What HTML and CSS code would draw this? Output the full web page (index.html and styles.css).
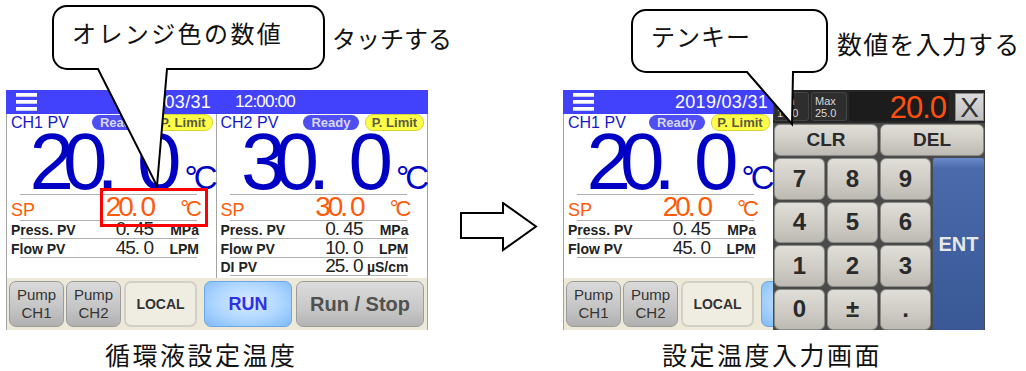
FILE: index.html
```html
<!DOCTYPE html>
<html lang="ja">
<head>
    <meta charset="UTF-8">
    <title>設定温度入力</title>
    <link rel="stylesheet" href="styles.css">
</head>
<body>

<div id="stage">
    <div class="figure">
        <div class="screen">
            <div class="hdr">
                <span class="menu"><i></i><i></i><i></i></span>
                <span class="date">2019/03/31</span>
                <span class="time">12:00:00</span>
            </div>
            <div class="panels">
                <div class="panel">
                    <div class="ptop">
                        <span class="ch">CH1 PV</span>
                        <span class="pill ready">Ready</span>
                        <span class="pill limit">P. Limit</span>
                    </div>
                    <div class="big">20. 0<span class="deg">°C</span></div>
                    <div class="row sp"><span class="lbl">SP</span><span class="val">20. 0</span><span class="unit">°C</span></div>
                    <div class="row r1"><span class="lbl">Press. PV</span><span class="val">0. 45</span><span class="unit">MPa</span></div>
                    <div class="row r2"><span class="lbl">Flow PV</span><span class="val">45. 0</span><span class="unit">LPM</span></div>
                </div>
                <div class="panel">
                    <div class="ptop">
                        <span class="ch">CH2 PV</span>
                        <span class="pill ready">Ready</span>
                        <span class="pill limit">P. Limit</span>
                    </div>
                    <div class="big">30. 0<span class="deg">°C</span></div>
                    <div class="row sp"><span class="lbl">SP</span><span class="val">30. 0</span><span class="unit">°C</span></div>
                    <div class="row r1"><span class="lbl">Press. PV</span><span class="val">0. 45</span><span class="unit">MPa</span></div>
                    <div class="row r2"><span class="lbl">Flow PV</span><span class="val">10. 0</span><span class="unit">LPM</span></div>
                    <div class="row r3"><span class="lbl">DI PV</span><span class="val">25. 0</span><span class="unit">µS/cm</span></div>
                </div>
            </div>
            <div class="bar">
                <div class="btn pump">Pump<br>CH1</div>
                <div class="btn pump pump2">Pump<br>CH2</div>
                <div class="btn local">LOCAL</div>
                <div class="btn run">RUN</div>
                <div class="btn runstop">Run / Stop</div>
            </div>
        </div>
        <p class="caption">循環液設定温度</p>
    </div>

    <div class="arrow">
        <svg width="78" height="50" viewBox="0 0 78 50">
            <path d="M1 11 H43 V1 L76 24.5 L43 48 V36 H1 Z" fill="#fff" stroke="#000" stroke-width="2"/>
        </svg>
    </div>

    <div class="figure">
        <div class="screen">
            <div class="hdr">
                <span class="menu"><i></i><i></i><i></i></span>
                <span class="date">2019/03/31</span>
                <span class="time">12:00:00</span>
            </div>
            <div class="panels">
                <div class="panel">
                    <div class="ptop">
                        <span class="ch">CH1 PV</span>
                        <span class="pill ready">Ready</span>
                        <span class="pill limit">P. Limit</span>
                    </div>
                    <div class="big">20. 0<span class="deg">°C</span></div>
                    <div class="row sp"><span class="lbl">SP</span><span class="val">20. 0</span><span class="unit">°C</span></div>
                    <div class="row r1"><span class="lbl">Press. PV</span><span class="val">0. 45</span><span class="unit">MPa</span></div>
                    <div class="row r2"><span class="lbl">Flow PV</span><span class="val">45. 0</span><span class="unit">LPM</span></div>
                </div>
                <div class="panel"></div>
            </div>
            <div class="bar">
                <div class="btn pump">Pump<br>CH1</div>
                <div class="btn pump pump2">Pump<br>CH2</div>
                <div class="btn local">LOCAL</div>
                <div class="btn run">RUN</div>
                <div class="btn runstop">Run / Stop</div>
            </div>

            <div class="keypad">
                <div class="kp-top">
                    <div class="lim">Min<br>15.0</div>
                    <div class="lim">Max<br>25.0</div>
                    <div class="display">20.0</div>
                    <div class="close">X</div>
                </div>
                <div class="keys">
                    <div class="key wide">CLR</div>
                    <div class="key wide">DEL</div>
                    <div class="key">7</div>
                    <div class="key">8</div>
                    <div class="key">9</div>
                    <div class="key ent">ENT</div>
                    <div class="key">4</div>
                    <div class="key">5</div>
                    <div class="key">6</div>
                    <div class="key">1</div>
                    <div class="key">2</div>
                    <div class="key">3</div>
                    <div class="key">0</div>
                    <div class="key">±</div>
                    <div class="key">.</div>
                </div>
            </div>
        </div>
        <p class="caption">設定温度入力画面</p>
    </div>

    <!-- callouts over the screens -->
    <svg class="callouts" width="1026" height="371" viewBox="0 0 1026 371">
        <path d="M67 6 H310 A14 14 0 0 1 324 20 V55 A14 14 0 0 1 310 69 H167 L157 186 L98 69 H67 A14 14 0 0 1 53 55 V20 A14 14 0 0 1 67 6 Z"
              fill="#fff" stroke="#000" stroke-width="2"/>
        <rect x="101.5" y="189.5" width="105" height="36" fill="none" stroke="#f00" stroke-width="3"/>
        <path d="M646 10 H813 A14 14 0 0 1 827 24 V58 A14 14 0 0 1 813 72 H793 L792 124 L747 72 H646 A14 14 0 0 1 632 58 V24 A14 14 0 0 1 646 10 Z"
              fill="#fff" stroke="#000" stroke-width="2"/>
    </svg>
    <div class="note note-orange">オレンジ色の数値</div>
    <div class="note note-touch">タッチする</div>
    <div class="note note-tenkey">テンキー</div>
    <div class="note note-input">数値を入力する</div>
</div>

</body>
</html>
```

FILE: styles.css
```css
body {
    margin: 0;
    background-color: #fff;
    font-family: "Liberation Sans", Arial, sans-serif;
    color: #222;
}

#stage {
    position: relative;
    width: 1026px;
    height: 371px;
    overflow: hidden;
    display: flex;
    align-items: flex-start;
    padding: 90px 0 0 6px;
    box-sizing: border-box;
}

.figure {
    width: 422px;
    flex: none;
}

.screen {
    position: relative;
    width: 422px;
    height: 240px;
    background-color: #ece9d8;
    overflow: hidden;
}

/* header */
.hdr {
    height: 24px;
    background-color: #4242fc;
    color: #fff;
    display: flex;
    align-items: center;
    font-size: 18px;
    line-height: 20px;
}

.menu {
    display: flex;
    flex-direction: column;
    gap: 3px;
    margin-left: 10px;
}

.menu i {
    display: block;
    width: 21px;
    height: 4px;
    background: linear-gradient(#fff 60%, #b8b8d8);
}

.date {
    margin-left: 81px;
    letter-spacing: 0.3px;
}

.time {
    margin-left: 24px;
    letter-spacing: -0.8px;
    font-size: 17px;
}

/* channel panels */
.panels {
    display: flex;
    height: 164px;
    background-color: #fff;
}

.panel {
    position: relative;
    width: 209px;
    border-left: 1px solid #a4a4a4;
    border-right: 1px solid #a4a4a4;
}

.panel + .panel {
    width: 211px;
    border-left: none;
}

.ptop {
    display: flex;
    align-items: center;
    height: 17px;
    padding: 0 3px 0 4px;
}

.ch {
    font-size: 16px;
    line-height: 17px;
    color: #1818c8;
    margin-right: auto;
}

.pill {
    height: 15px;
    line-height: 15px;
    border-radius: 8px;
    font-size: 13px;
    font-weight: bold;
    text-align: center;
}

.ready {
    width: 56px;
    background-color: #4e4ef2;
    color: #d8d8f0;
}

.limit {
    width: 57px;
    margin-left: 6px;
    background-color: #ffff48;
    color: #5a5a40;
    border: 1px solid #d4d43c;
}

.big {
    height: 64px;
    line-height: 62px;
    font-size: 80px;
    color: #0000c4;
    text-align: right;
    padding-right: 2px;
    letter-spacing: -11px;
    word-spacing: 18px;
    white-space: nowrap;
    background: linear-gradient(#b0b0b0, #b0b0b0) no-repeat 13px 63px / 177px 1px;
}

.deg {
    font-size: 33px;
    letter-spacing: -4px;
    margin-left: 14px;
}

.row {
    display: flex;
    align-items: baseline;
    box-sizing: border-box;
    padding-left: 4px;
    background: linear-gradient(#b0b0b0, #b0b0b0) no-repeat 13px 100% / 177px 1px;
    white-space: nowrap;
}

.row span {
    line-height: 16px;
}

.lbl {
    width: 82px;
    font-size: 14px;
    font-weight: bold;
    color: #222;
}

.val {
    width: 60px;
    text-align: right;
    font-size: 19px;
    color: #222;
    letter-spacing: -1px;
}

.unit {
    width: 46px;
    text-align: right;
    font-size: 14px;
    font-weight: bold;
    color: #222;
}

.row.sp {
    height: 26px;
    padding-top: 4px;
}

.sp .lbl {
    font-size: 18px;
    font-weight: normal;
    color: #ff5a0a;
}

.sp .val {
    font-size: 28px;
    color: #ff5a0a;
    letter-spacing: -3px;
}

.sp .unit {
    font-size: 22px;
    font-weight: normal;
    color: #ff5a0a;
    letter-spacing: -3px;
}

.row.r1 {
    height: 18px;
}

.row.r2 {
    height: 19px;
    padding-top: 1px;
}

.row.r3 {
    height: 18px;
}

/* button bar */
.bar {
    display: flex;
    height: 52px;
    padding: 3px 0 0 2px;
    box-sizing: border-box;
    border-left: 1px solid #a4a4a4;
    border-right: 1px solid #a4a4a4;
}

.btn {
    height: 46px;
    box-sizing: border-box;
    border-radius: 7px;
    display: flex;
    align-items: center;
    justify-content: center;
    text-align: center;
}

.pump {
    width: 55px;
    font-size: 15px;
    line-height: 18px;
    color: #333;
    background: linear-gradient(#dadada, #c4c4c4 60%, #b0b0b0);
    border: 1px solid #9c9c9c;
}

.pump2 {
    margin-left: 2px;
}

.local {
    width: 73px;
    margin-left: 3px;
    font-size: 14px;
    font-weight: bold;
    color: #333;
    background-color: #efece2;
    border: 2px solid #d2d0c6;
}

.run {
    width: 88px;
    margin-left: 7px;
    font-size: 18px;
    font-weight: bold;
    color: #3030e6;
    background: radial-gradient(ellipse at 50% 45%, #d8ecff 0%, #aed6ff 55%, #7fbaf6 100%);
    border: 1px solid #6ea6e6;
}

.runstop {
    width: 128px;
    margin-left: 4px;
    font-size: 20px;
    font-weight: bold;
    color: #505050;
    background: linear-gradient(#dcdcdc, #c8c8c8 60%, #b4b4b4);
    border: 1px solid #9c9c9c;
}

.caption {
    margin: 12px 0 0;
    padding-left: 99px;
    font-family: "Noto Sans CJK JP", sans-serif;
    font-size: 25px;
    line-height: 25px;
    letter-spacing: 2.5px;
    color: #111;
}

.arrow {
    flex: none;
    margin: 112px 25px 0 32px;
    height: 50px;
}

/* numeric keypad over the right screen */
.keypad {
    position: absolute;
    left: 210px;
    top: 0;
    width: 212px;
    height: 240px;
    background-color: #4a4a4a;
}

.kp-top {
    display: flex;
    align-items: center;
    height: 33px;
    padding: 0 1px 0 0;
    background-color: #262626;
    box-sizing: border-box;
}

.lim {
    width: 36px;
    height: 29px;
    margin-right: 2px;
    box-sizing: border-box;
    border: 1px solid #444;
    border-radius: 3px;
    background-color: #2e2e2e;
    color: #d8d8d8;
    font-size: 11px;
    line-height: 12px;
    padding: 2px 0 0 3px;
}

.display {
    width: 100px;
    height: 29px;
    box-sizing: border-box;
    border-radius: 3px;
    background-color: #1c1c1c;
    color: #ff5010;
    font-size: 31px;
    line-height: 31px;
    text-align: right;
    padding-right: 3px;
    letter-spacing: -1px;
}

.close {
    width: 29px;
    height: 28px;
    margin-left: auto;
    box-sizing: border-box;
    background: linear-gradient(#dcdcdc, #c0c0c0);
    border: 1px solid #888;
    color: #333;
    font-size: 28px;
    line-height: 27px;
    text-align: center;
}

.keys {
    display: grid;
    grid-template-columns: repeat(4, 1fr);
    grid-template-rows: 32px repeat(4, 1fr);
    gap: 2px;
    height: 207px;
    padding: 1px 1px 0 1px;
    box-sizing: border-box;
}

.key {
    display: flex;
    align-items: center;
    justify-content: center;
    border-radius: 6px;
    background: linear-gradient(#e0ded8, #cfccc5 55%, #bdbab3);
    border: 1px solid #8a8a86;
    font-size: 24px;
    font-weight: bold;
    color: #2a2a2a;
}

.key.wide {
    grid-column: span 2;
    font-size: 19px;
}

.key.ent {
    grid-column: 4;
    grid-row: 2 / span 4;
    border-radius: 2px;
    border: none;
    background: linear-gradient(#6a8acb, #4a6aab 6%, #3f5f9e 60%, #395895);
    color: #e8e8e8;
    font-size: 20px;
}

/* callouts */
.callouts {
    position: absolute;
    left: 0;
    top: 0;
}

.note {
    position: absolute;
    font-family: "Noto Sans CJK JP", sans-serif;
    font-size: 24px;
    line-height: 24px;
    color: #111;
    white-space: nowrap;
}

.note-orange {
    left: 72px;
    top: 21px;
    letter-spacing: 2.4px;
}

.note-touch {
    left: 332px;
    top: 26px;
}

.note-tenkey {
    left: 651px;
    top: 24px;
    letter-spacing: 1px;
}

.note-input {
    left: 837px;
    top: 31px;
    font-size: 25px;
    letter-spacing: 1.2px;
}
```
